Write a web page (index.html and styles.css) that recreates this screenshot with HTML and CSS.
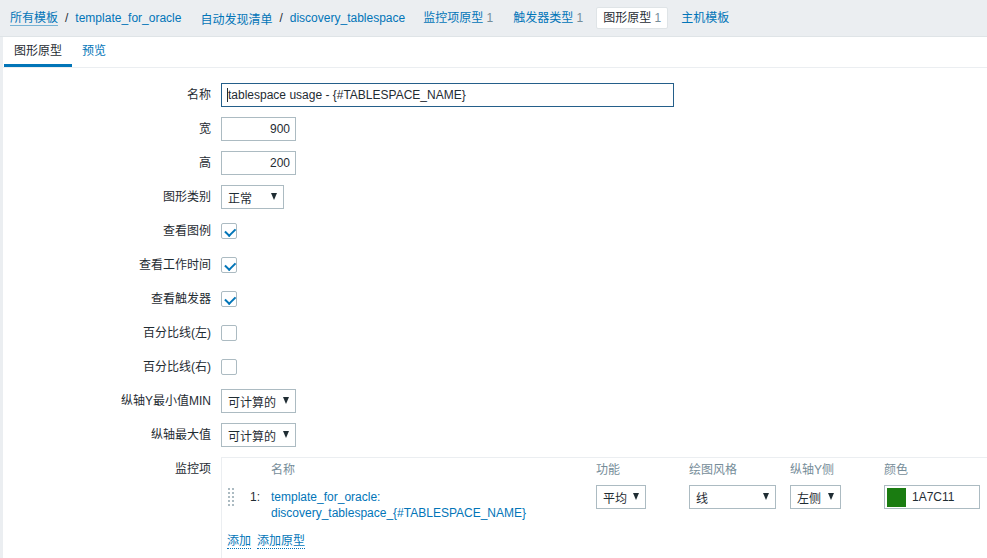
FILE: index.html
```html
<!DOCTYPE html>
<html lang="zh">
<head>
<meta charset="utf-8">
<title>图形原型</title>
<link rel="stylesheet" href="styles.css">
</head>
<body>
<nav class="topnav">
  <a class="crumb first" href="#">所有模板</a><span class="sep">/</span><a class="crumb" href="#">template_for_oracle</a>
  <a class="crumb group" href="#">自动发现清单</a><span class="sep">/</span><a class="crumb" href="#">discovery_tablespace</a>
  <span class="navitems">
    <a class="navitem" href="#">监控项原型 <span class="cnt">1</span></a>
    <a class="navitem" href="#">触发器类型 <span class="cnt">1</span></a>
    <span class="navitem selected">图形原型 <span class="cnt">1</span></span>
    <a class="navitem" href="#">主机模板</a>
  </span>
</nav>
<main class="main">
  <div class="tabs">
    <span class="tab active">图形原型</span>
    <a class="tab" href="#">预览</a>
  </div>
  <form class="form">
    <label class="lbl">名称</label>
    <div class="field"><div class="input wide focus"><span class="caret"></span>tablespace usage - {#TABLESPACE_NAME}</div></div>

    <label class="lbl">宽</label>
    <div class="field"><div class="input num">900</div></div>

    <label class="lbl">高</label>
    <div class="field"><div class="input num">200</div></div>

    <label class="lbl">图形类别</label>
    <div class="field"><div class="select w62"><span>正常</span><i class="arrow"></i></div></div>

    <label class="lbl">查看图例</label>
    <div class="field"><span class="cb checked"></span></div>

    <label class="lbl">查看工作时间</label>
    <div class="field"><span class="cb checked"></span></div>

    <label class="lbl">查看触发器</label>
    <div class="field"><span class="cb checked"></span></div>

    <label class="lbl">百分比线(左)</label>
    <div class="field"><span class="cb"></span></div>

    <label class="lbl">百分比线(右)</label>
    <div class="field"><span class="cb"></span></div>

    <label class="lbl">纵轴Y最小值MIN</label>
    <div class="field"><div class="select w74"><span>可计算的</span><i class="arrow"></i></div></div>

    <label class="lbl">纵轴最大值</label>
    <div class="field"><div class="select w74"><span>可计算的</span><i class="arrow"></i></div></div>

    <label class="lbl">监控项</label>
    <div class="field">
      <div class="itembox">
        <div class="items">
          <span></span><span></span>
          <span class="th">名称</span>
          <span class="th">功能</span>
          <span class="th">绘图风格</span>
          <span class="th">纵轴Y侧</span>
          <span class="th">颜色</span>

          <span class="drag"><svg width="6" height="18" viewBox="0 0 6 18"><g fill="#acbbc2"><rect x="0" y="0" width="2" height="2"/><rect x="4" y="0" width="2" height="2"/><rect x="0" y="4" width="2" height="2"/><rect x="4" y="4" width="2" height="2"/><rect x="0" y="8" width="2" height="2"/><rect x="4" y="8" width="2" height="2"/><rect x="0" y="12" width="2" height="2"/><rect x="4" y="12" width="2" height="2"/><rect x="0" y="16" width="2" height="2"/><rect x="4" y="16" width="2" height="2"/></g></svg></span>
          <span class="num-cell">1:</span>
          <a class="iname" href="#">template_for_oracle:<br>discovery_tablespace_{#TABLESPACE_NAME}</a>
          <div class="cell"><div class="select w50"><span>平均</span><i class="arrow"></i></div></div>
          <div class="cell"><div class="select w87"><span>线</span><i class="arrow"></i></div></div>
          <div class="cell"><div class="select w51"><span>左侧</span><i class="arrow"></i></div></div>
          <div class="cell"><div class="color"><span class="swatch"></span><span>1A7C11</span></div></div>
        </div>
        <div class="addlinks"><a href="#">添加</a><a href="#">添加原型</a></div>
      </div>
    </div>
  </form>
</main>
</body>
</html>
```
FILE: styles.css
```css
* { box-sizing: border-box; }
html, body { margin: 0; padding: 0; }
body {
  background: #ebeef1;
  font-family: "Liberation Sans", Arial, "Noto Sans CJK SC", sans-serif;
  font-size: 12px;
  color: #1f2c33;
  height: 558px;
  overflow: hidden;
}
a { color: #0275b8; text-decoration: none; }

.topnav {
  display: flex;
  align-items: center;
  height: 37px;
  padding-left: 10px;
  border-bottom: 1px solid #dfe4e7;
  white-space: nowrap;
}
.crumb.first { border-bottom: 1px solid rgba(2,117,184,0.5); line-height: 14px; }
.sep { margin: 0 7px; color: #1f2c33; }
.crumb.group { margin-left: 19px; }
.navitems { display: flex; align-items: center; margin-left: 11px; }
.navitem {
  padding: 0 6px;
  margin-right: 6px;
  height: 22px;
  line-height: 20px;
  border: 1px solid transparent;
  border-radius: 2px;
}
.navitem .cnt { color: #768d99; }
.navitem.selected { background: #fff; border-color: #dfe4e7; color: #1f2c33; }

.main {
  margin-left: 3px;
  background: #fff;
  height: 521px;
}
.tabs {
  display: flex;
  height: 31px;
  padding-left: 1px;
  border-bottom: 1px solid #ebeef1;
}
.tab {
  padding: 0 10px;
  line-height: 28px;
  height: 30px;
  border-bottom: 3px solid transparent;
}
.tab.active { border-bottom-color: #0275b8; color: #1f2c33; }

.form {
  display: grid;
  grid-template-columns: 208px 1fr;
  grid-auto-rows: 24px;
  column-gap: 10px;
  row-gap: 10px;
  padding-top: 15px;
}
.lbl {
  text-align: right;
  line-height: 24px;
  white-space: nowrap;
}
.field { display: flex; align-items: center; min-width: 0; }

.input {
  height: 24px;
  width: 75px;
  border: 1px solid #acbbc2;
  line-height: 22px;
  padding: 0 5px;
  white-space: nowrap;
  overflow: hidden;
}
.input.num { text-align: right; }
.input.wide { width: 453px; }
.input.focus { border-color: #245f8a; }
.caret {
  display: inline-block;
  width: 1px;
  height: 14px;
  background: #1f2c33;
  vertical-align: -3px;
}

.select {
  height: 24px;
  border: 1px solid #acbbc2;
  display: flex;
  align-items: center;
  justify-content: space-between;
  padding: 0 6px;
  white-space: nowrap;
  background: #fff;
}
.select .arrow {
  width: 0; height: 0;
  border-left: 3.5px solid transparent;
  border-right: 3.5px solid transparent;
  border-top: 7px solid #1f2c33;
  margin-top: -2px;
}
.w62 { width: 63px; }
.w74 { width: 75px; }
.w50 { width: 50px; }
.w87 { width: 87px; }
.w51 { width: 51px; }

.cb {
  width: 16px; height: 16px;
  border: 1px solid #acbbc2;
  border-radius: 2px;
  position: relative;
  display: inline-block;
}
.cb.checked::after {
  content: "";
  position: absolute;
  left: 4.5px; top: 2px;
  width: 4.5px; height: 7.5px;
  border-right: 2.5px solid #0275b8;
  border-bottom: 2.5px solid #0275b8;
  transform: rotate(45deg);
}

.field:last-child { align-items: flex-start; }
.itembox {
  border: 1px solid #ebeef1;
  border-right: none;
  width: 800px;
  height: 110px;
  padding: 4px 0 0 5px;
}
.items {
  display: grid;
  grid-template-columns: 22px 22px 325px 93px 101px 94px 120px;
  grid-template-rows: 18px auto;
  row-gap: 5px;
}
.th { color: #768d99; line-height: 16px; white-space: nowrap; }
.drag { padding-top: 3px; padding-left: 1px; }
.drag svg { display: block; }
.num-cell { color: #1f2c33; line-height: 16px; padding-top: 4px; padding-left: 1px; }
.iname { line-height: 16px; padding-top: 4px; white-space: nowrap; }
.cell { display: flex; align-items: flex-start; }
.color {
  width: 96px; height: 24px;
  border: 1px solid #acbbc2;
  display: flex; align-items: center;
  padding-left: 2px;
}
.swatch {
  width: 19px; height: 19px;
  background: #1a7c11;
  margin-right: 6px;
}
.addlinks { margin-top: 13px; display: flex; gap: 6px; line-height: 14px; }
.addlinks a { border-bottom: 1px dotted #0275b8; }
```
